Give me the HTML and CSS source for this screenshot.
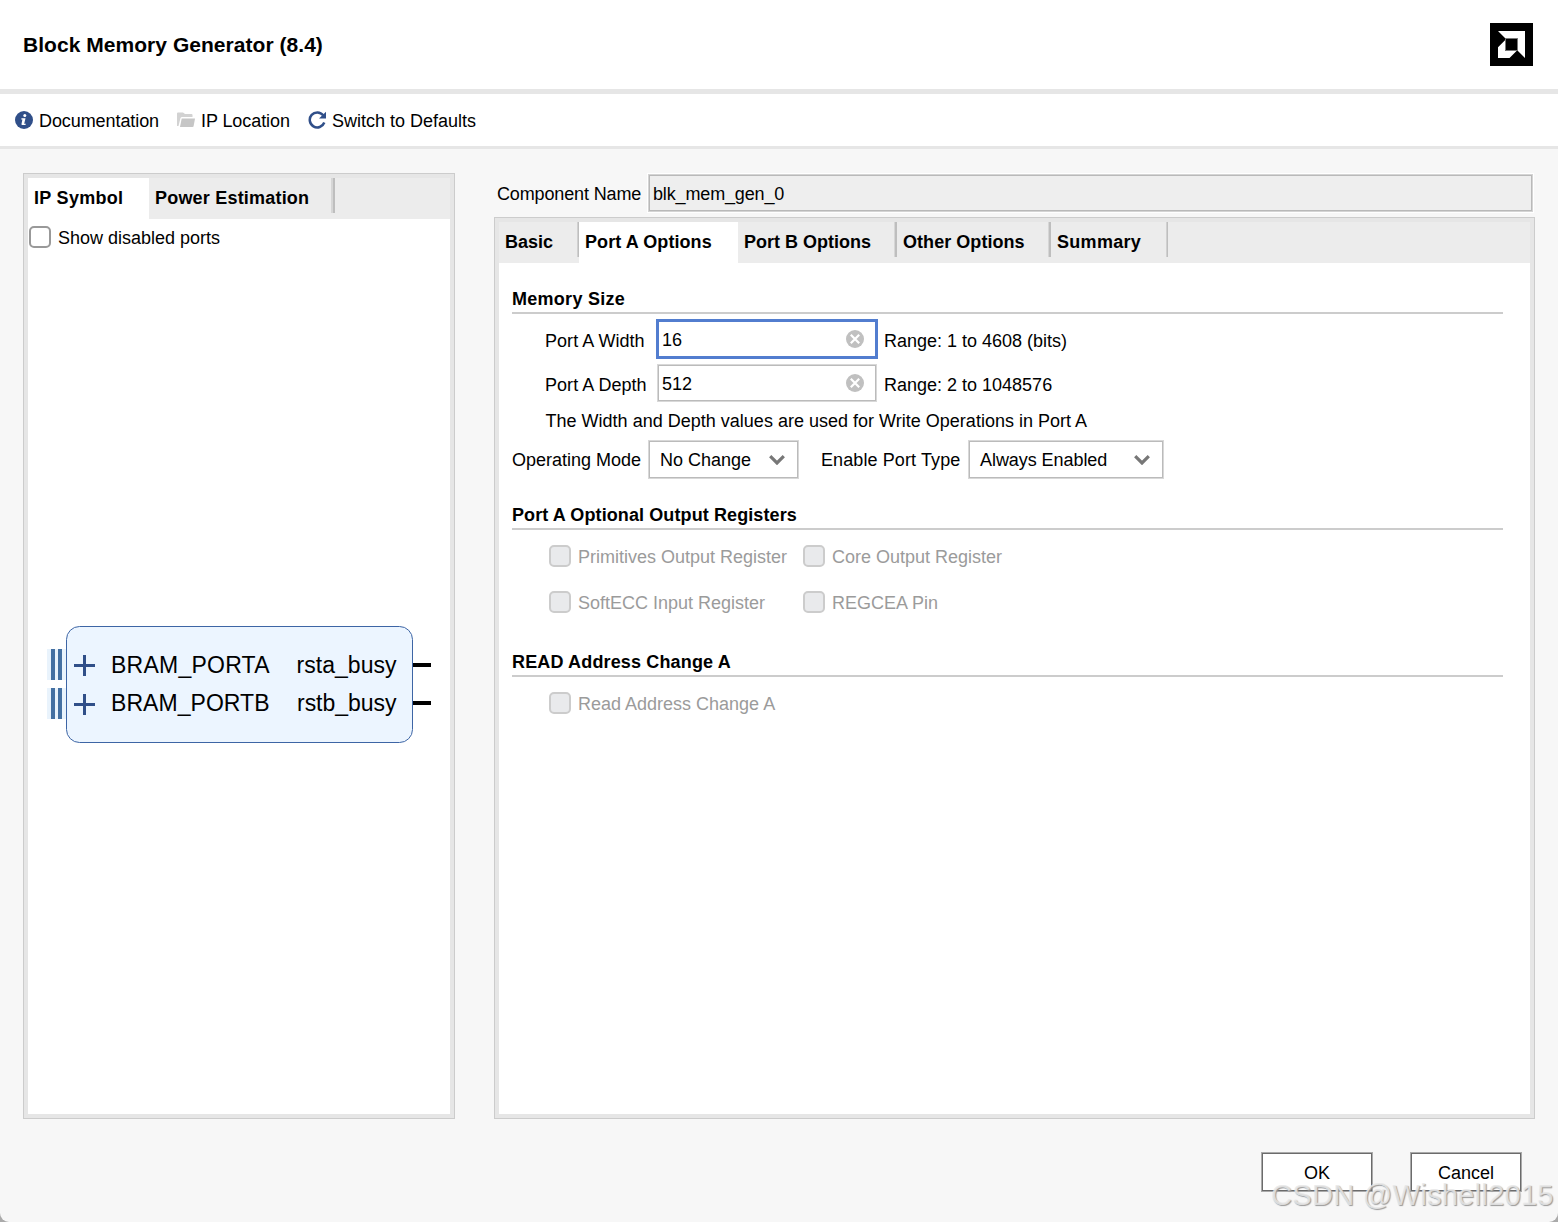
FILE: index.html
```html
<!DOCTYPE html>
<html lang="en">
<head>
<meta charset="utf-8">
<title>Block Memory Generator</title>
<link rel="stylesheet" href="styles.css">
</head>
<body>
<div class="dialog">
  <header class="header">
    <h1>Block Memory Generator (8.4)</h1>
    <svg class="logo" width="43" height="43" viewBox="0 0 43 43"><path fill="#000" d="M0 0h43v43H0z"/><path fill="#fff" d="M8 8h27v27l-7.500-7.500V15.500H15.500zM15.500 16.800V28h11L19.500 35H8V24.300z"/><path d="M15.500 15.500h12v12h-12z" fill="#000" stroke="#777"/></svg>
  </header>
  <nav class="toolbar">
    <a class="tool doc"><svg width="18" height="18" viewBox="0 0 18 18"><circle cx="9" cy="9" r="9" fill="#304f89"/><circle cx="9.800" cy="4.500" r="1.500" fill="#fff"/><path d="M6.500 7.300h4L9.200 12.800h1.700l-.5 1.300H7.200q-.9 0-.7-1L7.400 8.500H6.200z" fill="#fff"/></svg><span>Documentation</span></a>
    <a class="tool loc"><svg width="18" height="16" viewBox="0 0 18 16"><path d="M0 14V1.500Q0 .5 1 .5h5L8 2h6.500q1 0 1 1v2H5Q4 5 3.500 6L1.500 14z" fill="#d2d2d2"/><path d="M4.700 6.500H18l-1.400 7.700q-.2.800-1.100.8H3z" fill="#c6c6c6"/></svg><span>IP Location</span></a>
    <a class="tool def"><svg width="18" height="18" viewBox="0 0 18 18"><path d="M15.200 4.300A7.500 7.500 0 1 0 16.300 11.500" fill="none" stroke="#304f89" stroke-width="2.500"/><path d="M18 .8V7.500H11z" fill="#304f89"/></svg><span>Switch to Defaults</span></a>
  </nav>
  <main class="content">
    <section class="panel symbol">
      <div class="tabs">
        <div class="tab active t-ip">IP Symbol</div><div class="tab sep t-pow">Power Estimation</div>
      </div>
      <label class="check show"><i class="box"></i><span>Show disabled ports</span></label>
      <svg class="block" width="382" height="118" viewBox="0 0 382 118">
        <path d="M0 23h19v31H0zM0 62h19v31H0z" fill="#e9f3fc"/>
        <path d="M4 23h4v31H4zM11 23h4v31h-4zM4 62h4v31H4zM11 62h4v31h-4z" fill="#4470a2"/>
        <rect x="19.500" y=".5" width="346" height="116" rx="13" fill="#ecf5ff" stroke="#3d65a5"/>
        <path d="M27 39.500h21M37.500 29v21M27 78.500h21M37.500 68v21" stroke="#304f89" stroke-width="3"/>
        <path d="M366 39h18M366 77h18" stroke="#000" stroke-width="4"/>
        <g class="pins"><text x="64" y="47" textLength="158.500">BRAM_PORTA</text><text x="64" y="85" textLength="158.500">BRAM_PORTB</text><text x="249.500" y="47" textLength="100">rsta_busy</text><text x="250" y="85" textLength="99.500">rstb_busy</text></g>
      </svg>
    </section>
    <div class="config">
      <div class="component"><label>Component Name</label><div class="name">blk_mem_gen_0</div></div>
      <section class="panel options">
        <div class="tabs">
          <div class="tab sep t-basic">Basic</div><div class="tab active t-a">Port A Options</div><div class="tab sep t-b">Port B Options</div><div class="tab sep t-other">Other Options</div><div class="tab sep t-sum">Summary</div>
        </div>
        <div class="form">
          <h2>Memory Size</h2>
          <div class="row width"><label>Port A Width</label><div class="field focused"><span>16</span><svg width="18" height="18" viewBox="0 0 18 18"><circle cx="9" cy="9" r="9" fill="#c0c0c0"/><path d="M4.800 4.800l8.400 8.400M13.200 4.800l-8.400 8.400" stroke="#fff" stroke-width="2.200"/></svg></div><span>Range: 1 to 4608 (bits)</span></div>
          <div class="row depth"><label>Port A Depth</label><div class="field"><span>512</span><svg width="18" height="18" viewBox="0 0 18 18"><circle cx="9" cy="9" r="9" fill="#c0c0c0"/><path d="M4.800 4.800l8.400 8.400M13.200 4.800l-8.400 8.400" stroke="#fff" stroke-width="2.200"/></svg></div><span>Range: 2 to 1048576</span></div>
          <p class="hint">The Width and Depth values are used for Write Operations in Port A</p>
          <div class="modes">
            <label class="l-mode">Operating Mode</label><div class="select s-mode"><span>No Change</span><svg width="16" height="11" viewBox="0 0 16 11"><path d="M1.200 2.200L8 9l6.800-6.800" fill="none" stroke="#777" stroke-width="3.200"/></svg></div>
            <label class="l-type">Enable Port Type</label><div class="select s-type"><span>Always Enabled</span><svg width="16" height="11" viewBox="0 0 16 11"><path d="M1.200 2.200L8 9l6.800-6.800" fill="none" stroke="#777" stroke-width="3.200"/></svg></div>
          </div>
          <h2 class="h-reg">Port A Optional Output Registers</h2>
          <div class="checks">
            <label class="check off"><i class="box"></i><span>Primitives Output Register</span></label>
            <label class="check off"><i class="box"></i><span>Core Output Register</span></label>
            <label class="check off"><i class="box"></i><span>SoftECC Input Register</span></label>
            <label class="check off"><i class="box"></i><span>REGCEA Pin</span></label>
          </div>
          <h2 class="h-read">READ Address Change A</h2>
          <div class="checks"><label class="check off"><i class="box"></i><span>Read Address Change A</span></label></div>
        </div>
      </section>
    </div>
  </main>
  <footer class="footer"><button>OK</button><button>Cancel</button></footer>
  <div class="watermark">CSDN @Wishell2015</div>
</div>
</body>
</html>
```
FILE: styles.css
```css
* { box-sizing: border-box; }
body { margin: 0; background: #aaa; font: 18px/22px "Liberation Sans", Arial, sans-serif; color: #000; }
h1, h2, p { margin: 0; }
svg { display: block; flex: none; }
.dialog { position: relative; width: 1558px; height: 1222px; display: flex; flex-direction: column; background: #f7f7f7; border-radius: 0 0 9px 9px; overflow: hidden; white-space: nowrap; }
.header { height: 94px; flex: none; display: flex; align-items: center; justify-content: space-between; padding: 0 25px 0 23px; background: #fff; border-bottom: 5px solid #e6e6e6; }
h1 { font-size: 21px; line-height: 26px; letter-spacing: .04px; }
.toolbar { height: 55px; flex: none; display: flex; align-items: center; padding-left: 15px; background: #fff; border-bottom: 3px solid #e6e6e6; }
.tool { display: flex; align-items: center; gap: 6px; height: 22px; }
.tool span { padding-top: 2px; }
.doc { width: 162px; letter-spacing: -.08px; }
.loc { width: 131px; letter-spacing: -.08px; }
.content { height: 970px; flex: none; display: flex; gap: 39px; padding: 24px 23px 0; }
.panel { background: #fff; border: 1px solid #ccc; box-shadow: inset 0 0 0 4px #e6e6e6; padding: 4px; }
.symbol { width: 432px; height: 946px; }
.tabs { height: 41px; display: flex; background: #ececec; }
.tab { font-weight: bold; letter-spacing: .2px; padding: 9px 0 0 6px; height: 41px; }
.active { background: #fff; }
.sep { height: 35px; border-right: 2px solid #bebebe; box-shadow: inset -2px 0 #d6d6d6; }
.t-ip { width: 121px; letter-spacing: .3px; }
.t-pow { width: 186px; }
.t-basic { width: 80px; border-right-width: 1px; box-shadow: inset -1px 0 #d0d0d0; letter-spacing: 0; }
.t-a { width: 159px; letter-spacing: .08px; }
.t-b { width: 159px; box-shadow: inset -1px 0 #d6d6d6; letter-spacing: 0; }
.t-other { width: 154px; box-shadow: inset -1px 0 #d6d6d6; letter-spacing: .05px; }
.t-sum { width: 117px; border-right-width: 1px; box-shadow: inset -1px 0 #d0d0d0; letter-spacing: .3px; }
.check { display: flex; align-items: center; gap: 8px; height: 22px; }
.box { width: 22px; height: 22px; margin-right: -1px; border: 2px solid #999; border-radius: 5px; background: #fff; }
.check span { padding-top: 2px; }
.off { color: #9b9b9b; }
.off .box { border-color: #ccc; background: #e9eaec; }
.show { margin: 7px 0 0 1px; }
.block { margin: 378px 0 0 19px; overflow: visible; }
.pins { font-size: 23px; }
.config { width: 1041px; height: 946px; display: flex; flex-direction: column; }
.component { height: 44px; display: flex; padding: 1px 2px 0 3px; }
.component label { width: 151px; padding-top: 9px; letter-spacing: -.14px; }
.name { width: 885px; height: 38px; border: 1px solid #d4d4d4; outline: 1px solid #fff; box-shadow: inset 0 0 0 1px #b9b9b9; background: #eee; padding: 8px 0 0 4px; letter-spacing: -.15px; }
.options { flex: 1; }
.form { padding: 25px 27px 0 13px; }
h2 { height: 26px; font-size: 18px; line-height: 22px; letter-spacing: .28px; border-bottom: 2px solid #ccc; }
.row { display: flex; align-items: center; padding-left: 33px; height: 40px; }
.row label { width: 111px; padding-top: 3px; letter-spacing: .05px; }
.row > span { padding-top: 3px; }
.width { margin-top: 5px; }
.depth { margin-top: 4px; }
.field { width: 220px; height: 38px; margin: 0 7px 0 1px; border: 1px solid #d8d8d8; box-shadow: inset 0 0 0 1px #bbb; background: #fff; display: flex; align-items: center; justify-content: space-between; padding: 0 12px 0 4px; }
.focused { width: 222px; height: 40px; margin: 0 6px 0 0; border: 3px solid #527dcf; box-shadow: none; padding: 0 11px 0 3px; }
.field span { padding-top: 1px; }
.hint { padding-left: 33.500px; margin-top: 7px; height: 30px; letter-spacing: .01px; }
.modes { display: flex; height: 39px; align-items: center; }
.modes label, .select span { padding-top: 1px; }
.l-mode { width: 136px; }
.l-type { width: 147px; margin-left: 22px; letter-spacing: .1px; }
.select { height: 39px; border: 1px solid #d8d8d8; box-shadow: inset 0 0 0 1px #bbb; display: flex; align-items: center; justify-content: space-between; padding: 0 13px 0 11px; }
.s-mode { width: 151px; }
.s-type { width: 196px; }
.s-type span { letter-spacing: -.06px; }
.h-reg { margin-top: 25px; letter-spacing: .1px; }
.checks { display: grid; grid-template-columns: 254px 254px; row-gap: 24px; padding: 15px 0 0 37px; }
.h-read { margin-top: 38px; letter-spacing: .15px; }
.footer { display: flex; justify-content: flex-end; gap: 37px; padding: 33px 36px 0 0; }
button { width: 112px; height: 40px; padding: 2px 0 0; background: #fff; border: 1px solid #aaa; box-shadow: inset 0 0 0 1px #6b6b6b; font: inherit; color: #000; }
.watermark { position: absolute; left: 1271px; top: 1178px; font-size: 29px; line-height: 34px; letter-spacing: .3px; color: rgba(232, 232, 232, .85); text-shadow: 1px 1px 1px #999; }
```
